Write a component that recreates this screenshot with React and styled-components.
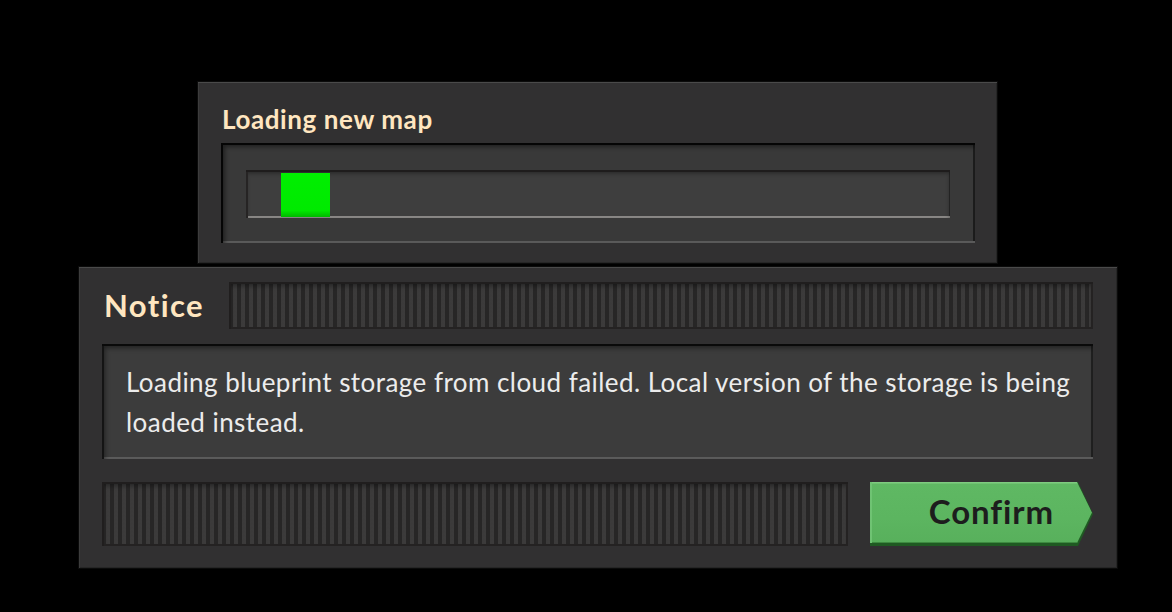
import React from "react";
import styled, { createGlobalStyle } from "styled-components";

const Global = createGlobalStyle`
  html, body { margin: 0; padding: 0; background: #000; }
  body { font-family: Lato, "Open Sans", sans-serif; }
  #root { width: 1172px; height: 612px; overflow: hidden; }
`;

const Page = styled.div`
  display: flex;
  flex-direction: column;
  padding-top: 82px;
`;

const Window = styled.section`
  box-sizing: border-box;
  margin-left: ${(p) => p.$left}px;
  width: ${(p) => p.$width}px;
  height: ${(p) => p.$height}px;
  margin-top: ${(p) => p.$top || 0}px;
  background: #313031;
  box-shadow: inset 0 1px 0 #4a4a4a, inset 1px 0 0 #3c3c3c,
    inset 0 -1px 0 #262626, inset -1px 0 0 #262626, 0 0 0 1px #0b0b0b;
  display: flex;
  flex-direction: column;
  padding: ${(p) => p.$pad};
`;

const Title = styled.h1`
  margin: 0;
  box-sizing: border-box;
  font-family: Lato, sans-serif;
  font-weight: 700;
  font-size: ${(p) => p.$size}px;
  line-height: ${(p) => p.$lh}px;
  letter-spacing: ${(p) => p.$track || 0}px;
  color: #ffe6c0;
  white-space: nowrap;
  padding-left: ${(p) => p.$indent || 0}px;
`;

const TitleRow = styled.div`
  box-sizing: border-box;
  height: 61px;
  padding-top: 24px;
`;

const DeepFrame = styled.div`
  box-sizing: border-box;
  height: 100px;
  padding: 27px 25px 25px 25px;
  background: #393939;
  box-shadow: inset 2px 2px 0 #050505, inset 4px 4px 4px rgba(0, 0, 0, 0.45),
    inset 0 -2px 0 #5a5a5a, inset -2px 0 0 #1c1c1c;
`;

const ProgressTrack = styled.div`
  position: relative;
  height: 48px;
  background: #3e3e3e;
  box-shadow: inset 0 2px 0 #1e1c1c, inset 2px 0 0 #262424,
    inset 0 3px 4px rgba(0, 0, 0, 0.4), inset 0 -2px 0 #8a8886,
    inset -1px 0 0 #2a2a2a;
  padding: 3px 0 1px 35px;
  box-sizing: border-box;
  display: flex;
`;

const ProgressFill = styled.div`
  height: 100%;
  background: linear-gradient(#00ef00, #00ea00 85%, #00b800);
`;

const NoticeHeader = styled.div`
  box-sizing: border-box;
  height: 77px;
  padding-top: 15px;
  padding-bottom: 15px;
  display: flex;
  align-items: stretch;
  gap: 25px;
`;

const Filler = styled.div`
  flex: ${(p) => (p.$grow ? 1 : "none")};
  box-sizing: border-box;
  background-color: #282727;
  background-image: repeating-linear-gradient(
    90deg,
    #272626 0px,
    #272626 3px,
    #3b3a3a 3px,
    #3c3b3b 7px,
    #272626 7px,
    #272626 8px
  );
  background-position: 1px 0;
  box-shadow: inset 0 2px 0 #201e1e, inset 2px 0 0 #201e1e,
    inset 0 -2px 0 #242222, inset -2px 0 0 #242222,
    inset 0 4px 4px rgba(0, 0, 0, 0.35);
`;

const MessageBox = styled.div`
  box-sizing: border-box;
  height: 115px;
  padding: 18px 16px 0 24px;
  background: #3c3c3c;
  box-shadow: inset 0 2px 0 #0a0a0a, inset 2px 0 0 #141414,
    inset 3px 4px 5px rgba(0, 0, 0, 0.45), inset 0 -2px 0 #5c5c5c,
    inset -2px 0 0 #202020;
  color: #ececec;
  font-family: Lato, sans-serif;
  font-size: 26px;
  letter-spacing: 0.45px;
  line-height: 40px;
  white-space: nowrap;
`;

const ActionRow = styled.div`
  display: flex;
  height: 64px;
  margin-top: 23px;
  gap: 22px;
`;

const ConfirmButton = styled.button`
  width: 223px;
  height: 64px;
  padding: 0;
  border: 0;
  background: #1f5a22;
  clip-path: polygon(0 0, calc(100% - 15px) 0, 100% 50%, calc(100% - 15px) 100%, 0 100%);
  display: flex;
  align-items: flex-start;
  cursor: pointer;
`;

const ButtonFace = styled.span`
  width: 100%;
  height: 61px;
  box-sizing: border-box;
  clip-path: polygon(0 0, calc(100% - 16px) 0, calc(100% - 1px) 50%, calc(100% - 16px) 100%, 0 100%);
  background: linear-gradient(#7fcb80 0, #7fcb80 1px, #5fb863 2px, #5cb560 60%, #58b05c 100%);
  box-shadow: inset 2px 0 0 #6fc373, inset 0 -1px 0 #3d8a40;
  display: flex;
  align-items: center;
  justify-content: flex-end;
  padding: 0 39px 3px 0;
  font-family: Lato, sans-serif;
  font-weight: 700;
  font-size: 33px;
  letter-spacing: 0.9px;
  color: #1d1d1d;
`;

export default function App() {
  const progress = 49;
  return (
    <>
      <Global />
      <Page>
        <Window $left={198} $width={799} $height={181} $pad="0 22px 20px 23px">
          <TitleRow>
            <Title $size={26} $lh={26} $track={0.6} $indent={1}>Loading new map</Title>
          </TitleRow>
          <DeepFrame>
            <ProgressTrack>
              <ProgressFill style={{ width: `${progress}px` }} />
            </ProgressTrack>
          </DeepFrame>
        </Window>
        <Window $left={79} $width={1038} $height={301} $top={4} $pad="0 24px 22px 23px">
          <NoticeHeader>
            <Title $size={31} $lh={47} $track={1.4} $indent={2}>Notice</Title>
            <Filler $grow />
          </NoticeHeader>
          <MessageBox>
            Loading blueprint storage from cloud failed. Local version of the storage is being
            <br />
            loaded instead.
          </MessageBox>
          <ActionRow>
            <Filler $grow />
            <ConfirmButton>
              <ButtonFace>Confirm</ButtonFace>
            </ConfirmButton>
          </ActionRow>
        </Window>
      </Page>
    </>
  );
}
